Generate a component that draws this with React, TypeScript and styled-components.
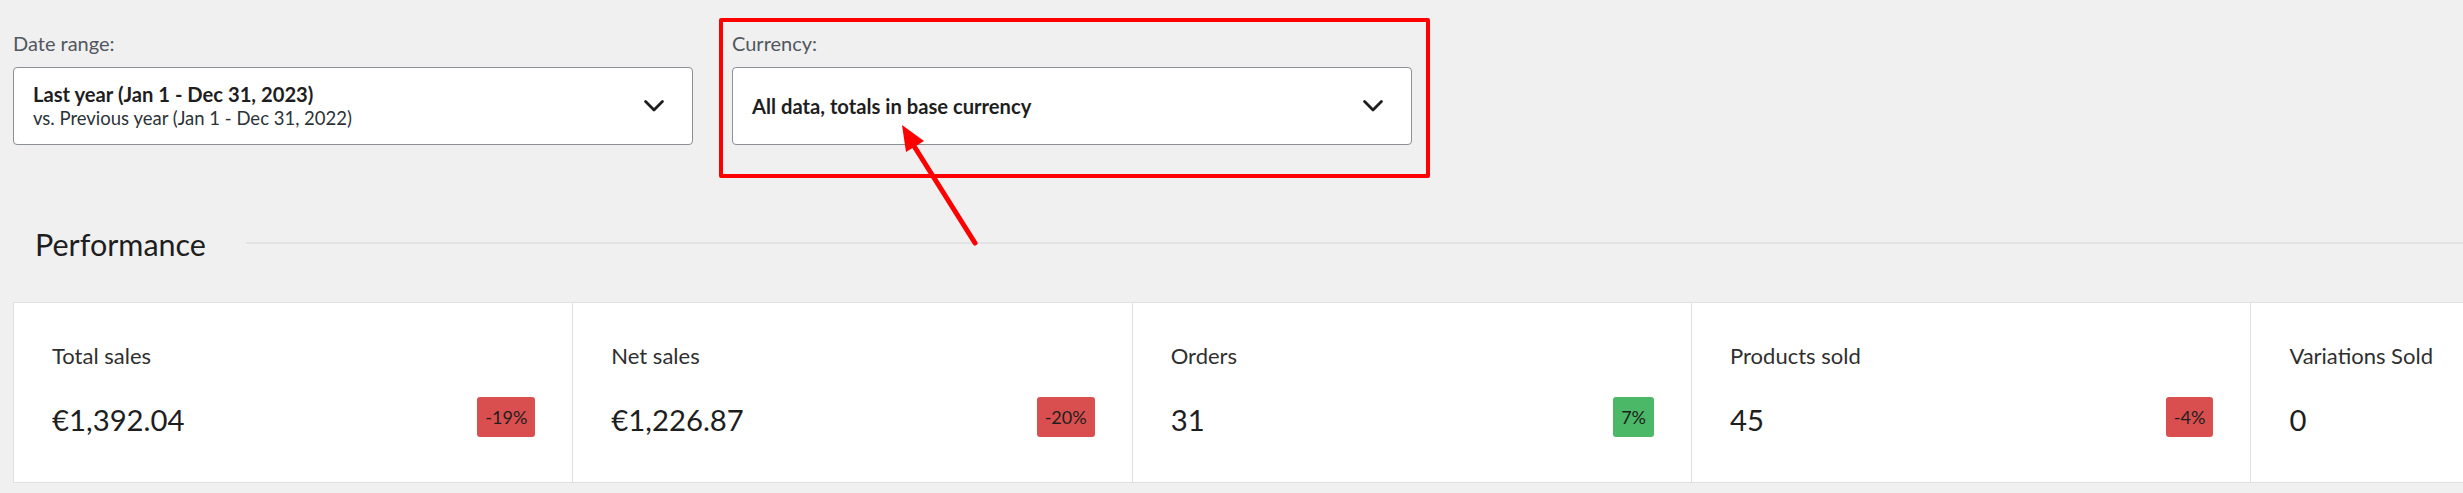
import styled, { createGlobalStyle } from 'styled-components';

interface Stat {
    label: string;
    value: string;
    delta?: number;
}

const STATS: Stat[] = [
    { label: 'Total sales', value: '€1,392.04', delta: -19 },
    { label: 'Net sales', value: '€1,226.87', delta: -20 },
    { label: 'Orders', value: '31', delta: 7 },
    { label: 'Products sold', value: '45', delta: -4 },
    { label: 'Variations Sold', value: '0' },
];

const Chevron = () => (
    <svg width="20" height="12" viewBox="0 0 20 12" fill="none">
        <polyline
            points="1.6,1.6 10,10 18.4,1.6"
            stroke="#1e1e1e"
            strokeWidth="2.8"
            strokeLinecap="round"
            strokeLinejoin="round"
        />
    </svg>
);

export default function App() {
    return (
        <>
            <GlobalStyle />
            <Page>
                <FilterRow>
                    <FilterGroup>
                        <FilterLabel>Date range:</FilterLabel>
                        <SelectBox>
                            <SelectText>
                                <strong>Last year (Jan 1 - Dec 31, 2023)</strong>
                                <span>vs. Previous year (Jan 1 - Dec 31, 2022)</span>
                            </SelectText>
                            <Chevron />
                        </SelectBox>
                    </FilterGroup>
                    <FilterGroup>
                        <FilterLabel>Currency:</FilterLabel>
                        <SelectBox>
                            <SelectText>
                                <strong>All data, totals in base currency</strong>
                            </SelectText>
                            <Chevron />
                        </SelectBox>
                    </FilterGroup>
                </FilterRow>

                <SectionHeading>
                    <h2>Performance</h2>
                    <Rule />
                </SectionHeading>

                <CardsViewport>
                    <Cards>
                        {STATS.map(s => (
                            <Card key={s.label}>
                                <CardLabel>{s.label}</CardLabel>
                                <ValueRow>
                                    <Value>{s.value}</Value>
                                    {s.delta !== undefined && (
                                        <Delta up={s.delta > 0}>{s.delta}%</Delta>
                                    )}
                                </ValueRow>
                            </Card>
                        ))}
                    </Cards>
                </CardsViewport>

                {/* annotation drawn over the screenshot */}
                <Highlight />
                <Arrow width="120" height="160" viewBox="880 110 120 160">
                    <line x1="975" y1="243" x2="914" y2="146" stroke="#ff0000" strokeWidth="5" strokeLinecap="round" />
                    <polygon points="902,125 924,141 906,152" fill="#ff0000" />
                </Arrow>
            </Page>
        </>
    );
}

// Styled components
const GlobalStyle = createGlobalStyle`
    html, body {
        margin: 0;
        padding: 0;
        overflow: hidden;
        background: #f0f0f0;
    }
    body {
        font-family: 'Lato', 'Open Sans', sans-serif;
        color: #1e1e1e;
    }
`;

const Page = styled.div`
    position: relative;
    width: 2463px;
    height: 493px;
    padding: 31px 0 0 13px;
    box-sizing: border-box;
    overflow: hidden;
`;

const FilterRow = styled.div`
    display: flex;
    gap: 39px;
`;

const FilterGroup = styled.div`
    display: flex;
    flex-direction: column;
    width: 680px;
`;

const FilterLabel = styled.div`
    font-size: 20px;
    line-height: 24px;
    color: #50575e;
    margin-bottom: 12px;
`;

const SelectBox = styled.div`
    display: flex;
    align-items: center;
    justify-content: space-between;
    height: 78px;
    box-sizing: border-box;
    padding: 0 28px 0 19px;
    background: #fff;
    border: 1px solid #8c8f94;
    border-radius: 4px;
`;

const SelectText = styled.div`
    display: flex;
    flex-direction: column;
    line-height: 24px;
    > strong {
        font-size: 20.2px;
        font-weight: 700;
    }
    > span {
        font-size: 18.5px;
        color: #2c3338;
    }
`;

const SectionHeading = styled.div`
    display: flex;
    align-items: center;
    gap: 40px;
    margin-top: 81px;
    padding-left: 22px;
    > h2 {
        margin: 0;
        font-size: 30.5px;
        line-height: 36px;
        font-weight: 400;
        color: #1e1e1e;
    }
`;

const Rule = styled.div`
    flex: 1;
    height: 2px;
    margin-top: -3px;
    background: #e2e2e2;
`;

const CardsViewport = styled.div`
    margin-top: 40px;
    width: 100%;
    overflow: hidden;
`;

const Cards = styled.div`
    display: flex;
    width: max-content;
    background: #fff;
    border: 1px solid #e0e0e0;
`;

const Card = styled.div`
    flex: 0 0 559.35px;
    box-sizing: border-box;
    padding: 40px 37px 44px 38px;
    border-right: 1px solid #e0e0e0;
`;

const CardLabel = styled.div`
    font-size: 22px;
    line-height: 26px;
    color: #2f2f2f;
    margin-bottom: 27px;
`;

const ValueRow = styled.div`
    display: flex;
    align-items: center;
    justify-content: space-between;
`;

const Value = styled.div`
    font-size: 29.3px;
    line-height: 36px;
    margin-top: 6px;
    color: #1e1e1e;
`;

const Delta = styled.span<{ up: boolean }>`
    display: inline-flex;
    align-items: center;
    height: 40px;
    padding: 0 8px;
    border-radius: 3px;
    font-size: 18px;
    color: #1e1e1e;
    background: ${({ up }) => (up ? '#4ab866' : '#d94f4f')};
`;

const Highlight = styled.div`
    position: absolute;
    left: 719px;
    top: 18px;
    width: 711px;
    height: 160px;
    box-sizing: border-box;
    border: 4px solid #ff0000;
    border-radius: 2px;
    pointer-events: none;
`;

const Arrow = styled.svg`
    position: absolute;
    left: 880px;
    top: 110px;
    overflow: visible;
    pointer-events: none;
`;
